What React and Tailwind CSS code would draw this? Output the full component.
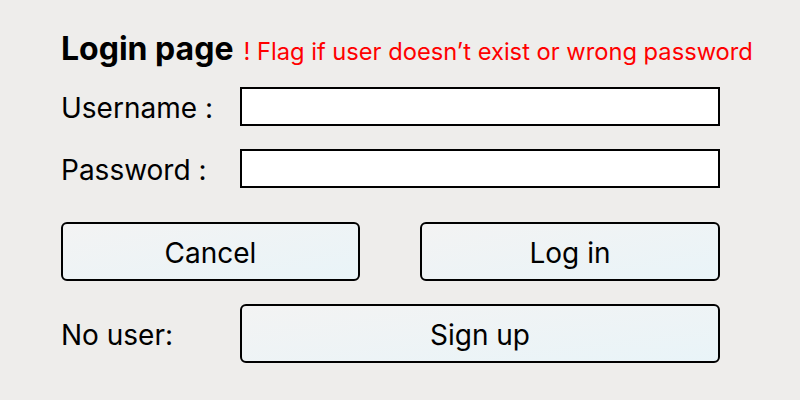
export default function App() {
  const font = { fontFamily: "Inter, 'Noto Sans', sans-serif" }

  return (
    <div className="w-[800px] h-[400px] bg-[#eeedeb] text-black" style={font}>
      <div className="flex flex-col pl-[61px] pr-[80px] pt-[33px]">
        {/* Title */}
        <div className="flex items-baseline gap-[10px] h-[32px] leading-none whitespace-nowrap">
          <span className="text-[32px] font-bold">Login page</span>
          <span className="text-[23.7px] text-[#ff0000]">! Flag if user doesn’t exist or wrong password</span>
        </div>

        {/* Fields */}
        <div className="flex items-center mt-[22px] h-[39px]">
          <span className="w-[179px] text-[28px] pt-[2px]">Username :</span>
          <input className="flex-1 h-[39px] bg-white border-2 border-black outline-none" />
        </div>
        <div className="flex items-center mt-[23px] h-[39px]">
          <span className="w-[179px] text-[28px] pt-[2px]">Password :</span>
          <input type="password" className="flex-1 h-[39px] bg-white border-2 border-black outline-none" />
        </div>

        {/* Actions */}
        <div className="flex justify-between mt-[34px]">
          <button className="w-[299px] h-[59px] pt-[2px] rounded-[6px] border-2 border-black bg-gradient-to-br from-[#f3f3f3] to-[#e9f4f8] text-[28px]">
            Cancel
          </button>
          <button className="w-[300px] h-[59px] pt-[2px] rounded-[6px] border-2 border-black bg-gradient-to-br from-[#f3f3f3] to-[#e9f4f8] text-[28px]">
            Log in
          </button>
        </div>

        <div className="flex items-center mt-[23px]">
          <span className="w-[179px] text-[28px] pt-[2px]">No user:</span>
          <button className="flex-1 h-[59px] pt-[2px] rounded-[6px] border-2 border-black bg-gradient-to-br from-[#f3f3f3] to-[#e9f4f8] text-[28px]">
            Sign up
          </button>
        </div>
      </div>
    </div>
  )
}
